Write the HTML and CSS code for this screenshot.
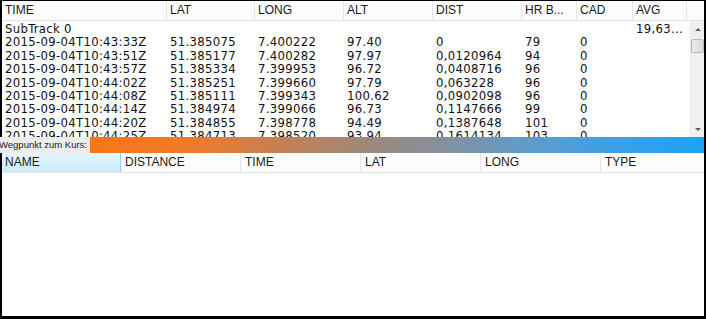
FILE: index.html
```html
<!DOCTYPE html>
<html lang="en">
<head>
    <meta charset="UTF-8">
    <meta name="viewport" content="width=device-width, initial-scale=1.0">
    <title>Track</title>
    <link rel="stylesheet" href="styles.css">
</head>
<body>
    <div class="frame">
        <div class="tracks">
            <div class="track-head">
                <div class="hcell c-time">TIME</div>
                <div class="hcell c-lat">LAT</div>
                <div class="hcell c-long">LONG</div>
                <div class="hcell c-alt">ALT</div>
                <div class="hcell c-dist">DIST</div>
                <div class="hcell c-hr">HR B...</div>
                <div class="hcell c-cad">CAD</div>
                <div class="hcell c-avg">AVG</div>
                <div class="hcell c-fill"></div>
            </div>
            <div class="track-body">
                <div class="rows" id="trackRows">
                    <div class="row">
                        <div class="cell c-time">SubTrack 0</div>
                        <div class="cell c-lat"></div>
                        <div class="cell c-long"></div>
                        <div class="cell c-alt"></div>
                        <div class="cell c-dist"></div>
                        <div class="cell c-hr"></div>
                        <div class="cell c-cad"></div>
                        <div class="cell c-avg">19,63...</div>
                    </div>
                    <div class="row">
                        <div class="cell c-time">2015-09-04T10:43:33Z</div>
                        <div class="cell c-lat">51.385075</div>
                        <div class="cell c-long">7.400222</div>
                        <div class="cell c-alt">97.40</div>
                        <div class="cell c-dist">0</div>
                        <div class="cell c-hr">79</div>
                        <div class="cell c-cad">0</div>
                        <div class="cell c-avg"></div>
                    </div>
                    <div class="row">
                        <div class="cell c-time">2015-09-04T10:43:51Z</div>
                        <div class="cell c-lat">51.385177</div>
                        <div class="cell c-long">7.400282</div>
                        <div class="cell c-alt">97.97</div>
                        <div class="cell c-dist">0,0120964</div>
                        <div class="cell c-hr">94</div>
                        <div class="cell c-cad">0</div>
                        <div class="cell c-avg"></div>
                    </div>
                    <div class="row">
                        <div class="cell c-time">2015-09-04T10:43:57Z</div>
                        <div class="cell c-lat">51.385334</div>
                        <div class="cell c-long">7.399953</div>
                        <div class="cell c-alt">96.72</div>
                        <div class="cell c-dist">0,0408716</div>
                        <div class="cell c-hr">96</div>
                        <div class="cell c-cad">0</div>
                        <div class="cell c-avg"></div>
                    </div>
                    <div class="row">
                        <div class="cell c-time">2015-09-04T10:44:02Z</div>
                        <div class="cell c-lat">51.385251</div>
                        <div class="cell c-long">7.399660</div>
                        <div class="cell c-alt">97.79</div>
                        <div class="cell c-dist">0,063228</div>
                        <div class="cell c-hr">96</div>
                        <div class="cell c-cad">0</div>
                        <div class="cell c-avg"></div>
                    </div>
                    <div class="row">
                        <div class="cell c-time">2015-09-04T10:44:08Z</div>
                        <div class="cell c-lat">51.385111</div>
                        <div class="cell c-long">7.399343</div>
                        <div class="cell c-alt">100.62</div>
                        <div class="cell c-dist">0,0902098</div>
                        <div class="cell c-hr">96</div>
                        <div class="cell c-cad">0</div>
                        <div class="cell c-avg"></div>
                    </div>
                    <div class="row">
                        <div class="cell c-time">2015-09-04T10:44:14Z</div>
                        <div class="cell c-lat">51.384974</div>
                        <div class="cell c-long">7.399066</div>
                        <div class="cell c-alt">96.73</div>
                        <div class="cell c-dist">0,1147666</div>
                        <div class="cell c-hr">99</div>
                        <div class="cell c-cad">0</div>
                        <div class="cell c-avg"></div>
                    </div>
                    <div class="row">
                        <div class="cell c-time">2015-09-04T10:44:20Z</div>
                        <div class="cell c-lat">51.384855</div>
                        <div class="cell c-long">7.398778</div>
                        <div class="cell c-alt">94.49</div>
                        <div class="cell c-dist">0,1387648</div>
                        <div class="cell c-hr">101</div>
                        <div class="cell c-cad">0</div>
                        <div class="cell c-avg"></div>
                    </div>
                    <div class="row">
                        <div class="cell c-time">2015-09-04T10:44:25Z</div>
                        <div class="cell c-lat">51.384713</div>
                        <div class="cell c-long">7.398520</div>
                        <div class="cell c-alt">93.94</div>
                        <div class="cell c-dist">0,1614134</div>
                        <div class="cell c-hr">103</div>
                        <div class="cell c-cad">0</div>
                        <div class="cell c-avg"></div>
                    </div>
                </div>
                <div class="scrollbar">
                    <div class="arrow arrow-up"></div>
                    <div class="thumb"></div>
                    <div class="track-space"></div>
                    <div class="arrow arrow-down"></div>
                </div>
            </div>
        </div>

        <div class="course-bar">
            <div class="course-label">Wegpunkt zum Kurs:</div>
            <div class="course-gradient"></div>
        </div>

        <div class="waypoints">
            <div class="wp-head">
                <div class="whcell active">NAME</div>
                <div class="whcell">DISTANCE</div>
                <div class="whcell">TIME</div>
                <div class="whcell">LAT</div>
                <div class="whcell">LONG</div>
                <div class="whcell">TYPE</div>
            </div>
            <div class="wp-body"></div>
        </div>
    </div>
</body>
</html>
```

FILE: styles.css
```css
body {
    margin: 0;
    background: #000;
    font-family: "Liberation Sans", Arial, sans-serif;
}

.frame {
    margin: 1px 2px 0 2px;
    height: 315px;
    background: #fff;
    display: flex;
    flex-direction: column;
}

/* top track list */

.tracks {
    height: 136px;
    overflow: hidden;
    display: flex;
    flex-direction: column;
}

.track-head,
.row {
    display: flex;
}

.track-head {
    height: 19px;
    flex-shrink: 0;
    border-bottom: 1px solid #e3e3e3;
    background: linear-gradient(#ffffff, #fafafa);
}

.hcell {
    font-size: 12px;
    line-height: 18px;
    color: #1a1a1a;
    padding-left: 3px;
    border-right: 1px solid #e6e6e6;
    box-sizing: border-box;
    white-space: nowrap;
    overflow: hidden;
}

.c-time { width: 165px; }
.c-lat { width: 88px; }
.c-long { width: 89px; }
.c-alt { width: 89px; }
.c-dist { width: 89px; }
.c-hr { width: 55px; }
.c-cad { width: 56px; }
.c-avg { width: 54px; }
.c-fill { flex: 1; border-right: none; }

.track-body {
    flex: 1;
    display: flex;
    min-height: 0;
}

.rows {
    flex: 1;
    overflow: hidden;
    padding-top: 1px;
}

.row {
    height: 13.4px;
}

.cell {
    font-family: "DejaVu Sans Condensed", "DejaVu Sans", sans-serif;
    font-size: 13px;
    letter-spacing: 0.3px;
    line-height: 13.4px;
    color: #111;
    padding-left: 3px;
    box-sizing: border-box;
    white-space: nowrap;
    overflow: hidden;
}

.scrollbar {
    width: 14px;
    flex-shrink: 0;
    background: #f0f0f0;
    border-left: 1px solid #e8e8e8;
    box-sizing: border-box;
    display: flex;
    flex-direction: column;
    align-items: center;
}

.arrow {
    width: 0;
    height: 0;
    border-left: 3px solid transparent;
    border-right: 3px solid transparent;
}

.arrow-up {
    margin-top: 7px;
    border-bottom: 3px solid #606060;
}

.arrow-down {
    margin-bottom: 6px;
    border-top: 3px solid #606060;
}

.thumb {
    margin-top: 8px;
    width: 13px;
    height: 14px;
    background: linear-gradient(90deg, #eaeaea, #dcdcdc);
    border: 1px solid #b8b8b8;
    border-radius: 2px;
    box-sizing: border-box;
}

.track-space {
    flex: 1;
}

/* course bar */

.course-bar {
    height: 16px;
    display: flex;
    margin-left: -2px;
}

.course-label {
    width: 90px;
    flex-shrink: 0;
    background: #ececec;
    font-size: 9.5px;
    line-height: 16px;
    color: #222;
    white-space: nowrap;
    text-indent: -1px;
}

.course-gradient {
    flex: 1;
    background: linear-gradient(90deg, #f8761a 0%, #f07a2a 16%, #c88050 30%, #9e8878 45%, #8a8e96 55%, #5e9cce 72%, #36a0ea 88%, #1ea2f6 100%);
}

/* waypoint list */

.waypoints {
    flex: 1;
    display: flex;
    flex-direction: column;
}

.wp-head {
    display: flex;
    height: 19px;
    border-bottom: 1px solid #e3e3e3;
    background: linear-gradient(#ffffff, #fafafa);
}

.whcell {
    width: 120px;
    font-size: 12px;
    line-height: 19px;
    color: #1a1a1a;
    padding-left: 4px;
    border-right: 1px solid #e6e6e6;
    box-sizing: border-box;
}

.whcell:first-child {
    width: 119px;
    padding-left: 3px;
}

.whcell:last-child {
    flex: 1;
    border-right: none;
}

.whcell.active {
    background: linear-gradient(#e6f6fd, #c9ecfa);
    border-right: 1px solid #96d1ee;
}

.wp-body {
    flex: 1;
    background: #fff;
}
```
